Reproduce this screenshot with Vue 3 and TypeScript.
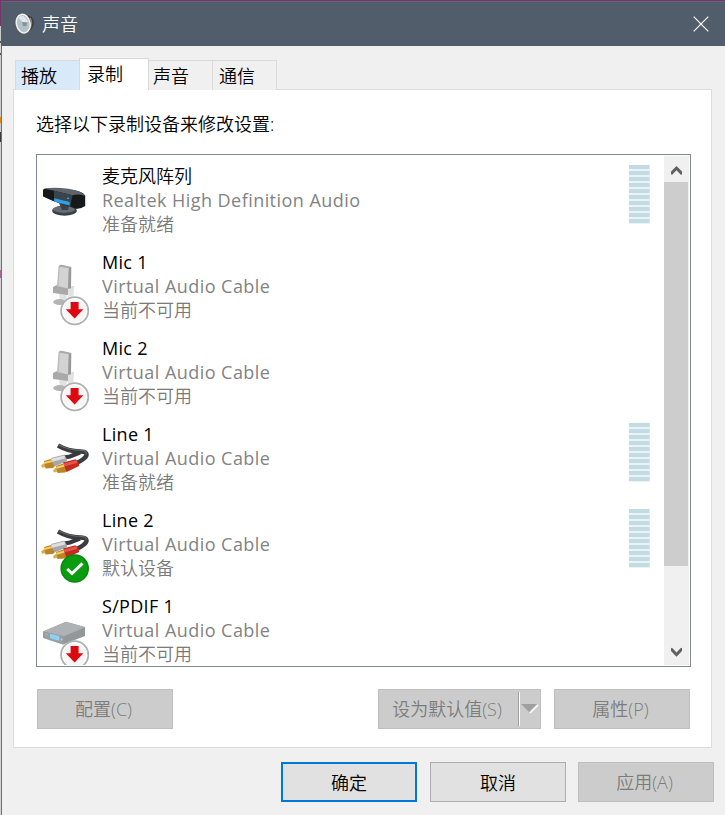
<script setup lang="ts">
import { ref } from 'vue'

type Icon = 'array' | 'mic' | 'line' | 'spdif'
type Badge = 'none' | 'unavailable' | 'default'

interface Device {
  name: string
  driver: string
  status: string
  icon: Icon
  badge: Badge
  meter: boolean
}

const cable = 'Virtual Audio Cable'
const devices: Device[] = [
  { name: '麦克风阵列', driver: 'Realtek High Definition Audio', status: '准备就绪', icon: 'array', badge: 'none', meter: true },
  { name: 'Mic 1', driver: cable, status: '当前不可用', icon: 'mic', badge: 'unavailable', meter: false },
  { name: 'Mic 2', driver: cable, status: '当前不可用', icon: 'mic', badge: 'unavailable', meter: false },
  { name: 'Line 1', driver: cable, status: '准备就绪', icon: 'line', badge: 'none', meter: true },
  { name: 'Line 2', driver: cable, status: '默认设备', icon: 'line', badge: 'default', meter: true },
  { name: 'S/PDIF 1', driver: cable, status: '当前不可用', icon: 'spdif', badge: 'unavailable', meter: false },
]
const tabs = ['播放', '录制', '声音', '通信']
const active = ref(1)
const isLatin = (s: string) => s.charCodeAt(0) < 128
</script>

<template>
  <div class="screen">
    <div class="window">
      <header class="titlebar">
        <svg class="speaker" width="20" height="22" viewBox="0 0 20 22">
          <path d="M9 1.5 L16 3.5 Q19.2 6 18.8 11 Q18 16 14 18.5 L9 20.5Z" fill="#3b3d3e" />
          <path d="M15 5 Q18 10 14.5 16" stroke="#8b8478" stroke-width="1.6" fill="none" />
          <ellipse cx="8.2" cy="10.6" rx="6.8" ry="9.4" transform="rotate(-12 8.2 10.6)" fill="#b5c0c6" stroke="#f0f2f2" stroke-width="1.5" />
          <path d="M3.5 5 L8 9.5 L13 9 Q11 3 6 2.5Z" fill="#dfe6e9" />
          <path d="M7 9 L12 9.5 L11.5 13 L8 13Z" fill="#83939d" />
        </svg>
        <span class="title">声音</span>
        <svg class="close" width="16" height="16" viewBox="0 0 16 16">
          <path d="M.7 .7 L15.3 15.3 M15.3 .7 L.7 15.3" stroke="#fff" stroke-width="1.2" />
        </svg>
      </header>

      <main class="body">
        <nav class="tabs">
          <button
            v-for="(t, i) in tabs"
            :key="t"
            class="tab"
            :class="{ active: i === active, hot: i === 0 && active !== 0 }"
            @click="active = i"
          >{{ t }}</button>
        </nav>

        <section class="panel">
          <p class="hint">选择以下录制设备来修改设置:</p>

          <div class="list">
            <ul class="rows">
              <li v-for="d in devices" :key="d.name" class="row">
                <svg class="icon" width="65" height="86" viewBox="0 0 65 86">
                  <g v-if="d.icon === 'array'">
                    <ellipse cx="27.5" cy="50.7" rx="12.3" ry="5" fill="#3c4147" />
                    <ellipse cx="27" cy="49.3" rx="11" ry="3.6" fill="#656c73" />
                    <path d="M22 43 L32 45 L31 50 L25 50Z" fill="#3b4148" />
                    <path d="M6 30 Q6.5 28.5 10 28.6 L36 30 Q46 31.5 48.2 35.5 L48.2 46 Q44 49 39 49 L31 45.8 L16 41 L6 36.5Z" fill="#16181a" />
                    <path d="M8 28.8 Q14 27.4 24 28 Q40 29 46 33.5 Q48 35 48 36 Q42 33.5 35.5 35.2 L17 30.8Z" fill="#5d646b" />
                    <path d="M17 30.8 L35.5 35.2 L33.3 46 L17 41.5Z" fill="#3a444d" />
                    <path d="M17.2 38.2 L32.6 42 L32.6 45.6 L17.2 41.6Z" fill="#2da3ee" />
                    <circle cx="31" cy="38.3" r=".9" fill="#39b2f5" />
                  </g>
                  <g v-else-if="d.icon === 'mic'">
                    <path d="M22 48 L30 48 L29 57 L23 56Z" fill="#e2e2e2" />
                    <ellipse cx="22.5" cy="56" rx="6.3" ry="3" fill="#b4b4b4" />
                    <path d="M16 41 L20 39 L31 42 L36.5 40 L36 48 L31 49 L16 47Z" fill="#a9a9a9" />
                    <path d="M31 42 L36.5 40 L36.5 50 L31 51Z" fill="#e2e2e2" />
                    <path d="M21.5 20.5 Q22 19 24 18.8 L34 21 L33.6 43 L20 40.5Z" fill="#bcbcbc" />
                    <path d="M23 20 L31.8 22 L31 42.2 L21.5 40Z" fill="#d3d3d3" />
                    <path d="M31.8 22 L34.3 21 L34 42 L31 42.8Z" fill="#999" />
                    <path d="M21.5 20.5 L24 18.7 L34.3 21 L31.8 22.2Z" fill="#aaa" />
                  </g>
                  <g v-else-if="d.icon === 'line'">
                    <g fill="none" stroke-linecap="butt">
                      <path d="M21 27.5 C27 31 34 33.5 43 33.5 C50 33.5 51.5 36.5 47 40.5 C45 42.5 42 43.5 40 45" stroke="#3a3c3f" stroke-width="4.4" />
                      <path d="M22 27 C28 30 35 32.4 43 32.4 C49 32.4 50 34 49 36.5" stroke="#66686b" stroke-width="1.1" />
                      <path d="M27 39.5 L33 38.5 L43 34.5" stroke="#37393c" stroke-width="4.2" />
                    </g>
                    <path d="M4 47.5 L6.5 45.5 L9 46 L9 49 L5 49.8Z" fill="#dcae4b" />
                    <path d="M7 43 L14 41 L18 48 L16 50 L8.5 50.5Z" fill="#b98526" />
                    <path d="M7 45 L15.5 43" stroke="#f0cc6a" stroke-width="2.2" />
                    <path d="M14 40 L26.5 36.8 Q30 39 30 43 L17.5 48.5Z" fill="#a5a7ab" />
                    <path d="M15 42.3 L27.8 39" stroke="#dfdfe2" stroke-width="3" />
                    <path d="M16 52.3 L18.5 50 L21 50.5 L21 53.5 L17 54.5Z" fill="#dcae4b" />
                    <path d="M19 48 L26 45.5 L30 53 L28 54.5 L20.5 55Z" fill="#b98526" />
                    <path d="M19.5 49.7 L27.5 47.5" stroke="#f0cc6a" stroke-width="2.2" />
                    <path d="M26 44.6 L38.5 41.3 Q42.5 44 42.2 48 L29.5 54Z" fill="#c42c1f" />
                    <path d="M27 47 L39.8 43.6" stroke="#e5574a" stroke-width="2.8" />
                  </g>
                  <g v-else>
                    <path d="M6 41.5 L29 31.8 L48 37 L48 46 L26 54.5 L6 47.5Z" fill="#92979a" />
                    <path d="M6 41.5 L29 31.8 L48 37.2 L27 46.3Z" fill="#aeb2b4" />
                    <path d="M6 41.5 L27 46.3 L26.5 54.5 L6 48Z" fill="#999fa2" />
                    <path d="M13 43.8 L22.3 46 L22.3 50.8 L13 48.2Z" fill="#8fd0f6" />
                    <circle cx="9.5" cy="44.3" r="1.3" fill="#c5a2a0" />
                    <circle cx="24.5" cy="49.5" r="1" fill="#c4c8ca" />
                  </g>

                  <g v-if="d.badge === 'unavailable'">
                    <circle cx="37.7" cy="64.7" r="13.6" fill="#fff" stroke="#b0b0b0" stroke-width="1.8" />
                    <circle cx="37.7" cy="64.7" r="11.5" fill="#f6f6f6" />
                    <path d="M33.6 56 H41.6 V63.3 H46.4 L37.6 72.6 L28.8 63.3 H33.6Z" fill="#dc0a10" />
                  </g>
                  <g v-else-if="d.badge === 'default'">
                    <circle cx="37.7" cy="64.5" r="14.3" fill="#078a0d" />
                    <circle cx="37.7" cy="64.5" r="12.8" fill="#0b9c10" />
                    <path d="M30.2 65 L35 69.5 L45.5 59.4" fill="none" stroke="#fff" stroke-width="3" />
                  </g>
                </svg>
                <div class="text">
                  <div class="name" :class="{ latin: isLatin(d.name) }">{{ d.name }}</div>
                  <div class="driver latin">{{ d.driver }}</div>
                  <div class="status">{{ d.status }}</div>
                </div>
                <div v-if="d.meter" class="meter"><i v-for="n in 10" :key="n" /></div>
              </li>
            </ul>
            <div class="scrollbar">
              <svg class="arrow" width="25" height="26" viewBox="0 0 25 26"><path d="M7 18 V15.5 L12.5 10 L18 15.5 V18 L17 19 L12.5 14.3 L8 19Z" fill="#606060" /></svg>
              <div class="thumb"></div>
              <svg class="arrow" width="25" height="26" viewBox="0 0 25 26"><path d="M7 9.3 V12 L12.5 17.8 L18 12 V9.3 L17 8.8 L12.5 13.5 L8 8.8Z" fill="#606060" /></svg>
            </div>
          </div>

          <div class="actions">
            <button class="btn" disabled>配置(C)</button>
            <div class="split">
              <button class="split-main" disabled>设为默认值(S)</button>
              <button class="split-drop" disabled>
                <svg width="18" height="12" viewBox="0 0 18 12"><path d="M9 10 L17 2" stroke="#fff" stroke-width="1.6" /><path d="M0 1 H16 L8 9Z" fill="#a0a0a0" /></svg>
              </button>
            </div>
            <button class="btn" disabled>属性(P)</button>
          </div>
        </section>

        <footer class="footer">
          <button class="btn primary">确定</button>
          <button class="btn">取消</button>
          <button class="btn" disabled>应用(A)</button>
        </footer>
      </main>
    </div>
  </div>
</template>

<style>
body {
  margin: 0;
}
</style>

<style scoped>
* {
  box-sizing: border-box;
}
.screen {
  width: 725px;
  height: 815px;
  padding: 1px 0 0 1px;
  overflow: hidden;
  background:
    linear-gradient(#74356d 0 26px, #c9c9c9 26px 41px, #555 41px 43px, #d5d5d5 43px 53px, #555 53px 55px, #ccc 55px 117px, #d98b20 117px 123px, #ccc 123px 132px, #3b3b3b 132px 142px, #d0d0d0 142px 270px, #a86aa3 270px 278px, #d4d4d4 278px) 0 0 / 1px 815px no-repeat,
    #74356d;
  font-family: 'Open Sans', 'Noto Sans CJK SC', sans-serif;
  font-size: 18px;
  font-weight: 350;
  color: #000;
}
button {
  font: inherit;
  padding: 0;
  margin: 0;
  border-radius: 0;
}
.window {
  height: 814px;
  border-left: 1px solid #65717c;
  background: #f0f0f0;
}
.titlebar {
  display: flex;
  align-items: center;
  height: 45px;
  margin-left: -1px;
  padding: 0 16px 0 14px;
  border-top: 1px solid #66637a;
  background: #525d6b;
  color: #fff;
}
.title {
  flex: 1;
  margin-left: 7px;
  line-height: 24px;
}
.close {
  display: block;
}
.body {
  padding: 12px 13px 0 11px;
}
.tabs {
  display: flex;
  align-items: flex-end;
  height: 32px;
  padding-left: 2px;
}
.tab {
  width: 64px;
  height: 30px;
  padding-left: 6px;
  border: 1px solid #d9d9d9;
  border-left: 0;
  border-bottom: 0;
  background: #f0f0f0;
  color: #000;
  text-align: left;
  line-height: 28px;
}
.tab.hot {
  padding-left: 5px;
  border-left: 1px solid #d9d9d9;
  border-right: 0;
  background: #d8eaf9;
}
.tab.active {
  position: relative;
  width: 70px;
  height: 32px;
  padding-left: 7px;
  padding-bottom: 2px;
  border-left: 1px solid #d9d9d9;
  background: #fff;
  line-height: 26px;
}
.tab.active + .tab {
  padding-left: 4px;
}
.panel {
  height: 659px;
  margin-top: -1px;
  padding: 22px 20px 0 22px;
  border: 1px solid #dcdcdc;
  background: #fff;
}
.hint {
  margin: 0 0 17px;
  line-height: 25px;
}
.list {
  display: flex;
  width: 655px;
  height: 513px;
  padding: 1px;
  border: 1px solid #828790;
  overflow: hidden;
}
.rows {
  flex: 1;
  height: 509px;
  margin: 0 0 0 -1px;
  padding: 4px 0 0;
  list-style: none;
  overflow: hidden;
}
.row {
  display: flex;
  height: 86px;
}
.icon {
  flex: none;
}
.text {
  flex: 1;
  padding-top: 4px;
  line-height: 24px;
  white-space: nowrap;
}
.latin {
  font-weight: 400;
}
.name.latin {
  letter-spacing: 0.3px;
}
.driver {
  letter-spacing: 0.45px;
}
.driver,
.status {
  color: #838383;
}
.status {
  color: #7a7a7a;
}
.meter {
  display: flex;
  flex-direction: column;
  gap: 2px;
  width: 21px;
  height: 59px;
  margin: 5px 14px 0 0;
  background: #eaf4f6;
}
.meter i {
  height: 4px;
  background: #c3dce3;
  border-right: 1px solid #d5e8ec;
}
.scrollbar {
  display: flex;
  flex-direction: column;
  width: 25px;
  height: 509px;
  background: #f0f0f0;
}
.arrow {
  display: block;
}
.thumb {
  width: 24px;
  height: 384px;
  margin-bottom: 73px;
  background: #cdcdcd;
}
.actions {
  display: flex;
  width: 653px;
  margin: 22px 0 0 1px;
}
.btn {
  width: 136px;
  height: 40px;
  padding-bottom: 1px;
  border: 1px solid #adadad;
  background: #e1e1e1;
  color: #000;
}
.btn:disabled,
.split {
  border: 1px solid #bfbfbf;
  background: #cccccc;
  color: #7c7c7c;
}
.btn:disabled {
  padding: 0 3px 2px 0;
}
.split {
  display: flex;
  width: 163px;
  height: 40px;
  margin: 0 13px 0 auto;
}
.split button {
  border: 0;
  background: none;
  color: #7c7c7c;
}
.split .split-main {
  width: 139px;
  padding: 0 3px 2px 0;
}
.split-drop {
  flex: 1;
  display: flex;
  align-items: center;
  justify-content: center;
  margin: 2px 0;
}
.split .split-drop {
  border-left: 1px solid #a0a0a0;
  box-shadow: inset 1px 0 #fff;
}
.footer {
  display: flex;
  justify-content: flex-end;
  gap: 12px;
  padding: 14px 0 0;
  margin-right: -2px;
}
.primary {
  margin-right: 1px;
  border: 2px solid #0078d7;
}
</style>
